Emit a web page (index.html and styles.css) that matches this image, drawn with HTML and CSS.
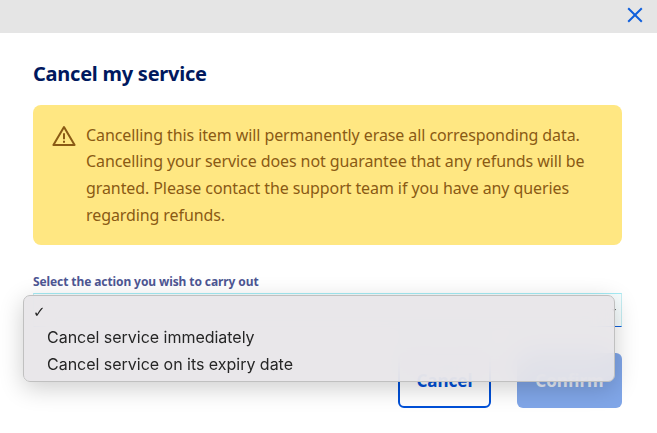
FILE: index.html
```html
<!DOCTYPE html>
<html lang="en">
<head>
<meta charset="utf-8">
<title>Cancel my service</title>
<link rel="stylesheet" href="styles.css">
</head>
<body>
<div class="modal">
  <header class="modal-top">
    <button class="close" aria-label="Close">
      <svg width="16" height="16" viewBox="0 0 16 16"><path d="M1.2 1.2 14.8 14.8M14.8 1.2 1.2 14.8" fill="none" stroke="#0f5fdc" stroke-width="2"/></svg>
    </button>
  </header>
  <main class="modal-body">
    <h1 class="title">Cancel my service</h1>
    <div class="alert">
      <svg class="alert-icon" width="24" height="22" viewBox="0 0 24 22"><path d="M12 2 22.6 20H1.4Z" fill="none" stroke="#8a5a14" stroke-width="2" stroke-linejoin="round"/><path d="M12 8.2v6M12 15.8v2" fill="none" stroke="#8a5a14" stroke-width="2"/></svg>
      <p class="alert-text">Cancelling this item will permanently erase all corresponding data. Cancelling your service does not guarantee that any refunds will be granted. Please contact the support team if you have any queries regarding refunds.</p>
    </div>
    <label class="field-label">Select the action you wish to carry out</label>
    <div class="select"><span class="select-arrow"></span></div>
    <div class="actions">
      <button class="btn btn-outline">Cancel</button>
      <button class="btn btn-primary">Confirm</button>
    </div>
  </main>
  <div class="menu">
    <div class="menu-item"><span class="check">✓</span></div>
    <div class="menu-item">Cancel service immediately</div>
    <div class="menu-item">Cancel service on its expiry date</div>
  </div>
</div>
</body>
</html>
```
FILE: styles.css
```css
* { box-sizing: border-box; }
html, body { margin: 0; padding: 0; background: #fff; }
body { width: 657px; height: 433px; overflow: hidden; font-family: "Noto Sans", sans-serif; }
.modal { position: relative; height: 433px; }
.modal-top { height: 33px; background: #e5e5e5; display: flex; justify-content: flex-end; align-items: center; padding-right: 14px; }
.close { border: 0; background: none; padding: 0; width: 16px; height: 16px; display: block; margin-top: -4px; }
.close svg { display: block; }
.modal-body { padding: 27px 35px 0 33px; }
.title { margin: 0 0 18px; font-size: 20px; line-height: 27px; font-weight: 700; color: #00185e; letter-spacing: -0.25px; }
.alert { height: 140px; background: #ffe782; border-radius: 8px; display: flex; padding: 16.5px 18px 0 19px; color: #8a5a14; }
.alert-icon { flex: none; margin: 3px 10px 0 0; }
.alert-text { margin: 0; font-size: 16px; line-height: 26.7px; letter-spacing: -0.09px; }
.field-label { display: block; margin-top: 29px; font-size: 12px; line-height: 16px; font-weight: 700; color: #4d5693; letter-spacing: -0.1px; }
.select { height: 34px; margin-top: 3px; border-top: 1px solid #a5ecf5; border-right: 1px solid #c5eef3; border-left: 1px solid #c5eef3; border-bottom: 1px solid #0f5fdc; background: #f7fdfe; display: flex; justify-content: flex-end; align-items: center; padding-right: 5px; }
.select-arrow { width: 0; height: 0; border-left: 2px solid transparent; border-right: 2px solid transparent; border-top: 3px solid #333; }
.actions { display: flex; justify-content: flex-end; gap: 26px; margin-top: 26px; }
.btn { height: 55px; border-radius: 6px; font-family: "Noto Sans", sans-serif; font-size: 17px; font-weight: 700; padding: 0; }
.btn-outline { width: 93px; background: #fff; border: 2px solid #0050d7; color: #0050d7; }
.btn-primary { width: 105px; background: #80a6e8; border: 0; color: #e6ecf7; }
.menu { position: absolute; left: 23px; top: 295px; width: 592px; height: 87px; padding-top: 1px; background: rgba(231,229,232,.92); -webkit-backdrop-filter: blur(14px); backdrop-filter: blur(14px); border: 1px solid #c0c0c0; border-radius: 7px; box-shadow: 0 6px 24px rgba(0,0,0,.2); font-family: Inter, sans-serif; font-size: 16px; line-height: 27px; color: #262626; }
.menu-item { padding-left: 23px; height: 27px; position: relative; letter-spacing: -0.02px; }
.check { position: absolute; left: 9px; top: 2px; font-size: 15px; font-family: "DejaVu Sans", sans-serif; }
```
